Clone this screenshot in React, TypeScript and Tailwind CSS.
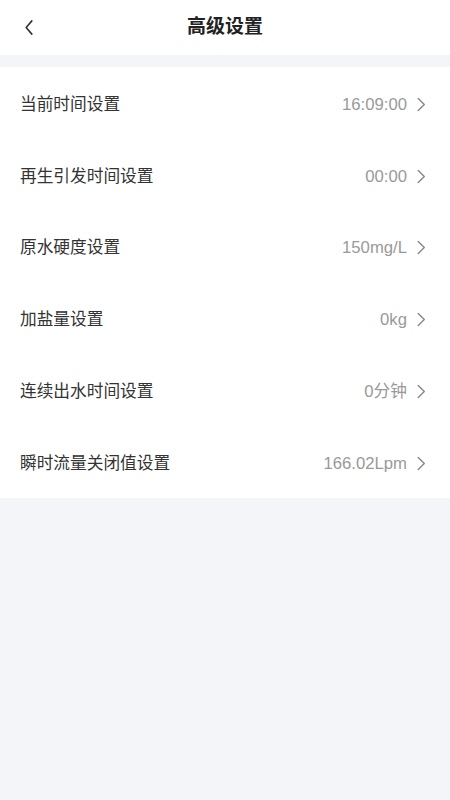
const rows = [
  { label: "当前时间设置", value: "16:09:00" },
  { label: "再生引发时间设置", value: "00:00" },
  { label: "原水硬度设置", value: "150mg/L" },
  { label: "加盐量设置", value: "0kg" },
  { label: "连续出水时间设置", value: "0分钟" },
  { label: "瞬时流量关闭值设置", value: "166.02Lpm" },
];

function Chevron({ className }: { className?: string }) {
  return (
    <svg viewBox="0 0 10 16" className={className} fill="none" stroke="currentColor" strokeWidth="1.5" strokeLinecap="round" strokeLinejoin="round">
      <path d="M2 1.5l6.5 6.5-6.5 6.5" />
    </svg>
  );
}

export default function App() {
  return (
    <div
      className="min-h-[800px] w-[450px] bg-[#f4f5f9]"
      style={{ fontFamily: '"Liberation Sans", "Noto Sans CJK SC", sans-serif' }}
    >
      <header className="relative flex h-[55px] items-center justify-center bg-white">
        <button className="absolute left-[23px] top-[19px] text-[#333]">
          <svg viewBox="0 0 12 18" className="h-[17px] w-[12px]" fill="none" stroke="currentColor" strokeWidth="1.7" strokeLinecap="round" strokeLinejoin="round">
            <path d="M9 2L3 9l6 7" />
          </svg>
        </button>
        <h1 className="text-[19px] font-bold text-[#222]">高级设置</h1>
      </header>

      <ul className="mt-[12px] bg-white">
        {rows.map((r) => (
          <li key={r.label} className="flex h-[71.8px] items-center justify-between pt-[3px] pl-[20px] pr-[24px]">
            <span className="text-[16.7px] text-[#333]">{r.label}</span>
            <span className="flex items-center gap-[9px] text-[16.7px] text-[#999]">
              {r.value}
              <Chevron className="h-[15px] w-[10px] text-[#888]" />
            </span>
          </li>
        ))}
      </ul>
    </div>
  );
}
